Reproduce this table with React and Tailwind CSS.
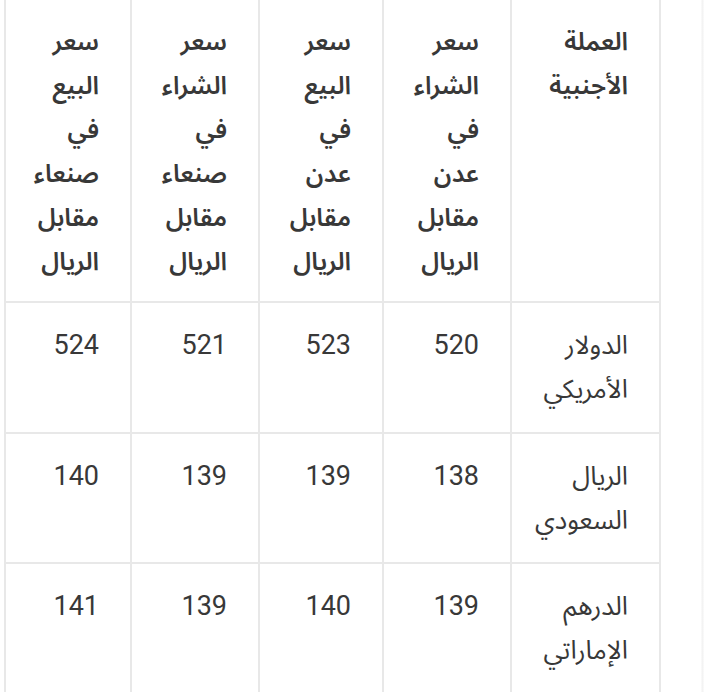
import React from "react";

const headers = [
  ["العملة", "الأجنبية"],
  ["سعر", "الشراء", "في", "عدن", "مقابل", "الريال"],
  ["سعر", "البيع", "في", "عدن", "مقابل", "الريال"],
  ["سعر", "الشراء", "في", "صنعاء", "مقابل", "الريال"],
  ["سعر", "البيع", "في", "صنعاء", "مقابل", "الريال"],
];

const rows = [
  { name: ["الدولار", "الأمريكي"], vals: ["520", "523", "521", "524"], h: "h-[131px]" },
  { name: ["الريال", "السعودي"], vals: ["138", "139", "139", "140"], h: "h-[130px]" },
  { name: ["الدرهم", "الإماراتي"], vals: ["139", "140", "139", "141"], h: "h-[131px]" },
];

const widths = ["w-[149px]", "w-[128px]", "w-[124px]", "w-[128px]", "w-[126px]"];

function Lines({ words }) {
  return (
    <>
      {words.map((w, i) => (
        <span key={i} className="block">
          {w}
        </span>
      ))}
    </>
  );
}

export default function App() {
  return (
    <div
      className="flex h-[692px] w-[720px] overflow-hidden bg-white"
      style={{ fontFamily: 'Roboto, "Noto Sans Arabic", "Noto Sans", "DejaVu Sans", sans-serif' }}
    >
      <div className="w-[701px] shrink-0" dir="rtl">
        <div className="mr-[40px] -mt-[2px] w-[657px] border-t-2 border-r-2 border-[#e8e8e8] text-[26px] leading-[44px] text-[#383838]">
          <div className="flex h-[303px]">
            {headers.map((h, i) => (
              <div
                key={i}
                className={`${widths[i]} shrink-0 border-b-2 border-l-2 border-[#e8e8e8] pt-[20px] pr-[31px] text-right text-[25px] font-semibold`}
              >
                <Lines words={h} />
              </div>
            ))}
          </div>
          {rows.map((r, ri) => (
            <div key={ri} className={`flex ${r.h}`}>
              <div className={`${widths[0]} shrink-0 border-b-2 border-l-2 border-[#e8e8e8] pt-[20px] pr-[31px] text-right`}>
                <Lines words={r.name} />
              </div>
              {r.vals.map((v, vi) => (
                <div
                  key={vi}
                  className={`${widths[vi + 1]} shrink-0 border-b-2 border-l-2 border-[#e8e8e8] pt-[20px] pr-[31px] text-right text-[27px]`}
                >
                  {v}
                </div>
              ))}
            </div>
          ))}
        </div>
      </div>
      <div className="w-[3px] shrink-0 bg-gradient-to-r from-[#fbfbfb] via-[#f3f3f3] to-[#fbfbfb]" />
      <div className="flex-1 bg-white" />
    </div>
  );
}
